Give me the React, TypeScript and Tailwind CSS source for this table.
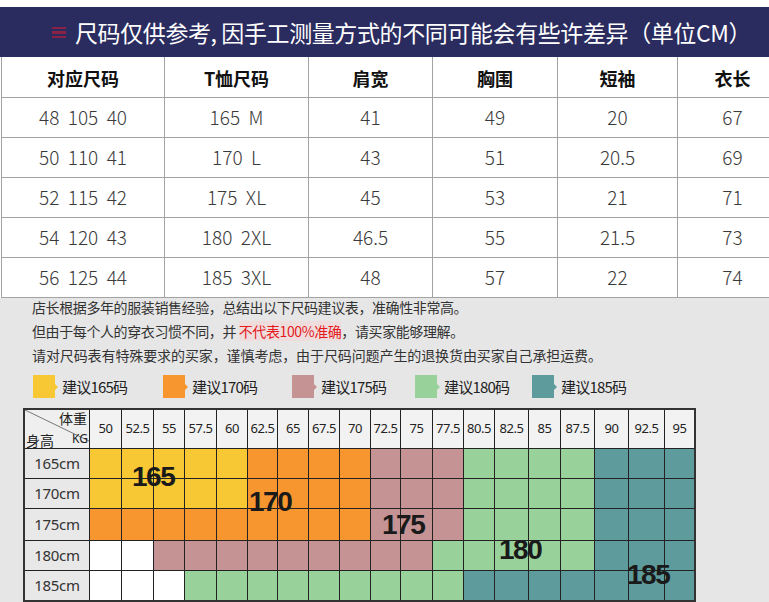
import React from "react";

const cjk = "font-['Noto_Sans_CJK_SC','Noto_Sans',sans-serif]";

const headers = ["对应尺码", "T恤尺码", "肩宽", "胸围", "短袖", "衣长"];
const rows = [
  ["48  105  40", "165  M", "41", "49", "20", "67"],
  ["50  110  41", "170  L", "43", "51", "20.5", "69"],
  ["52  115  42", "175  XL", "45", "53", "21", "71"],
  ["54  120  43", "180  2XL", "46.5", "55", "21.5", "73"],
  ["56  125  44", "185  3XL", "48", "57", "22", "74"],
];

const weights = ["50", "52.5", "55", "57.5", "60", "62.5", "65", "67.5", "70", "72.5", "75", "77.5", "80.5", "82.5", "85", "87.5", "90", "92.5", "95"];
const heights = ["165cm", "170cm", "175cm", "180cm", "185cm"];
const grid = [
  "YYYYYOOOOPPPGGGGTTT",
  "YYYYYOOOOPPPGGGGTTT",
  "OOOOOOOOOPPPGGGGTTT",
  "WWPPPPPPPPPGGGGGTTT",
  "WWWGGGGGGGGGTTTTTTT",
];
const colorClass: Record<string, string> = {
  Y: "bg-[#f8c834]",
  O: "bg-[#f7952f]",
  P: "bg-[#c59393]",
  G: "bg-[#99d19b]",
  T: "bg-[#5e9b9d]",
  W: "bg-white",
};

const legend = [
  { c: "bg-[#f8c834]", t: "建议165码", w: "w-[130px]", tri: "border-l-[#f8c834]" },
  { c: "bg-[#f7952f]", t: "建议170码", w: "w-[129px]", tri: "border-l-[#f7952f]" },
  { c: "bg-[#c59393]", t: "建议175码", w: "w-[123px]", tri: "border-l-[#c59393]" },
  { c: "bg-[#99d19b]", t: "建议180码", w: "w-[117px]", tri: "border-l-[#99d19b]" },
  { c: "bg-[#5e9b9d]", t: "建议185码", w: "w-[120px]", tri: "border-l-[#5e9b9d]" },
];

const bigLabels = [
  { t: "165", cls: "left-[107px] top-[53px]" },
  { t: "170", cls: "left-[224px] top-[78px]" },
  { t: "175", cls: "left-[357px] top-[101px]" },
  { t: "180", cls: "left-[474px] top-[126px]" },
  { t: "185", cls: "left-[602px] top-[151px]" },
];

export default function App() {
  return (
    <div className={`w-[769px] h-[602px] overflow-hidden bg-white ${cjk}`}>
      <div className="h-[7px] bg-white" />
      <div className="h-[50px] bg-[#2a2b5e] flex items-center pl-[52px]">
        <div className="w-[14px] h-[11px] flex flex-col justify-between mr-[9px] opacity-80">
          <div className="h-[2px] bg-[#a3203f]" />
          <div className="h-[3px] bg-[#a3203f]" />
          <div className="h-[2px] bg-[#a3203f]" />
        </div>
        <span className="text-white text-[23px] leading-none whitespace-pre tracking-[-0.4px]">
          尺码仅供参考, 因手工测量方式的不同可能会有些许差异（单位CM）
        </span>
      </div>

      <div className="w-[787px] ml-[1px] border-l border-[#a3a3a3] grid grid-cols-[163px_144px_124px_125px_120px_110px] grid-rows-[41px_40px_40px_40px_40px_40px]">
        {headers.map((h) => (
          <div key={h} className="border-r border-b border-[#a3a3a3] flex items-center justify-center text-[18px] font-bold text-[#111] pt-[3px]">
            {h}
          </div>
        ))}
        {rows.map((r, i) =>
          r.map((v, j) => (
            <div key={`${i}-${j}`} className="border-r border-b border-[#a3a3a3] flex items-center justify-center text-[19px] font-light text-[#3a3a3a] whitespace-pre">
              {v}
            </div>
          ))
        )}
      </div>

      <div className="h-[304px] bg-[#e6e6e6] flex flex-col">
        <div className="pl-[32px] text-[14px] text-[#333] flex flex-col">
          <div className="h-[24px] leading-[18px] tracking-[-0.4px]">店长根据多年的服装销售经验，总结出以下尺码建议表，准确性非常高。</div>
          <div className="h-[24px] leading-[18px] tracking-[-0.4px]">
            但由于每个人的穿衣习惯不同，并 <span className="text-[#e3191c] bg-[#efdddd]">不代表100%准确</span>，请买家能够理解。
          </div>
          <div className="h-[24px] leading-[18px] tracking-[-0.1px]">请对尺码表有特殊要求的买家，谨慎考虑，由于尺码问题产生的退换货由买家自己承担运费。</div>
        </div>

        <div className="mt-[5px] h-[23px] pl-[33px] flex">
          {legend.map((l) => (
            <div key={l.t} className={`${l.w} flex items-center`}>
              <div className={`w-[22px] h-[23px] ${l.c}`} />
              <div className={`w-0 h-0 border-y-[3px] border-y-transparent border-l-[3px] ${l.tri}`} />
              <span className="ml-[4px] text-[15px] text-[#222] tracking-[-0.8px] leading-none">{l.t}</span>
            </div>
          ))}
        </div>

        <div className="mt-[10px] ml-[23px] w-[673px] relative border-2 border-[#333] bg-white">
          <div className="grid grid-cols-[65px_32px_32px_31px_32px_31px_30px_31px_31px_31px_30px_32px_31px_31px_34px_32px_34px_34px_36px_29px] grid-rows-[39px_30px_30px_32px_30px_29px]">
            <div className="relative border-r border-b border-[#222] bg-[#efefef]">
              <svg className="absolute inset-0" width="64" height="38">
                <line x1="0" y1="0" x2="64" y2="31" stroke="#777" strokeWidth="1" />
              </svg>
              <span className="absolute right-[2px] top-[1px] text-[14px] leading-[14px] text-[#222]">体重</span>
              <span className="absolute right-[1px] top-[23px] text-[12px] leading-[12px] text-[#222] font-['Noto_Sans',sans-serif]">KG</span>
              <span className="absolute left-[1px] top-[23px] text-[14px] leading-[14px] text-[#222]">身高</span>
            </div>
            {weights.map((w, j) => (
              <div
                key={w}
                className={`${j === weights.length - 1 ? "" : "border-r"} border-b border-[#222] bg-[#f2f2f2] flex items-center justify-center text-[13px] text-[#222] tracking-[-0.5px] font-['Noto_Sans',sans-serif]`}
              >
                {w}
              </div>
            ))}
            {heights.map((h, i) => (
              <React.Fragment key={h}>
                <div className={`border-r ${i === heights.length - 1 ? "" : "border-b"} border-[#222] bg-[#e8e8e8] flex items-center justify-center text-[15px] text-[#333] font-['Noto_Sans',sans-serif] tracking-[-0.3px]`}>
                  {h}
                </div>
                {grid[i].split("").map((c, j) => (
                  <div
                    key={j}
                    className={`${j === 18 ? "" : "border-r"} ${i === heights.length - 1 ? "" : "border-b"} border-[#222] ${colorClass[c]}`}
                  />
                ))}
              </React.Fragment>
            ))}
          </div>
          {bigLabels.map((b) => (
            <span
              key={b.t}
              className={`absolute ${b.cls} text-[28px] leading-[28px] font-bold text-[#1a1a1a] tracking-[-1.5px] font-['Liberation_Sans',Arial,sans-serif]`}
            >
              {b.t}
            </span>
          ))}
        </div>
      </div>
    </div>
  );
}
